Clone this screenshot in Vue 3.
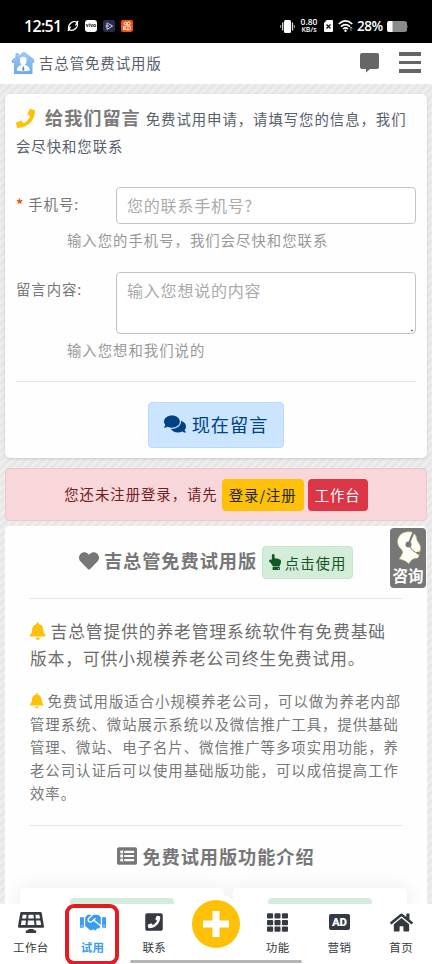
<script setup>
const icons = {
  phone: { box: '0 0 512 512', d: 'M493.4 24.6l-104-24c-11.3-2.6-22.9 3.3-27.5 13.9l-48 112c-4.2 9.8-1.4 21.3 6.9 28l60.6 49.6c-36 76.7-98.9 140.5-177.2 177.2l-49.6-60.6c-6.8-8.3-18.2-11.1-28-6.9l-112 48C3.9 366.5-2 378.1.6 389.4l24 104C27.1 504.2 36.7 512 48 512c256.1 0 464-207.5 464-464 0-11.2-7.7-20.9-18.6-23.4z' },
  comments: { box: '0 0 576 512', d: 'M416 192c0-88.4-93.1-160-208-160S0 103.6 0 192c0 34.3 14.1 65.9 38 92-13.4 30.2-35.5 54.2-35.8 54.5-2.2 2.3-2.8 5.7-1.5 8.7S4.8 352 8 352c36.6 0 66.9-12.3 88.7-25 32.2 15.7 70.3 25 111.3 25 114.9 0 208-71.6 208-160zm122 220c23.9-26 38-57.7 38-92 0-66.9-53.5-124.2-129.3-148.1.9 6.6 1.3 13.3 1.3 20.1 0 105.9-107.7 192-240 192-10.8 0-21.3-.8-31.7-1.9C207.8 439.6 281.8 480 368 480c41 0 79.1-9.2 111.3-25 21.8 12.7 52.1 25 88.7 25 3.2 0 6.1-1.9 7.3-4.8 1.3-2.9.7-6.3-1.5-8.7-.3-.3-22.4-24.2-35.8-54.5z' },
  heart: { box: '0 0 512 512', d: 'M462.3 62.6C407.5 15.9 326 24.3 275.7 76.2L256 96.5l-19.7-20.3C186.1 24.3 104.5 15.9 49.7 62.6c-62.8 53.6-66.1 149.8-9.9 207.9l193.5 199.8c12.5 12.9 32.8 12.9 45.3 0l193.5-199.8c56.3-58.1 53-154.3-9.8-207.9z' },
  bell: { box: '0 0 448 512', d: 'M224 512c35.32 0 63.97-28.65 63.97-64H160.03c0 35.35 28.65 64 63.97 64zm215.39-149.71c-19.32-20.76-55.47-51.99-55.47-154.29 0-77.7-54.48-139.9-127.94-155.16V32c0-17.67-14.32-32-31.98-32s-31.98 14.33-31.98 32v20.84C118.56 68.1 64.08 130.3 64.08 208c0 102.3-36.15 133.53-55.47 154.29-6 6.45-8.66 14.16-8.61 21.71.11 16.4 12.98 32 32.1 32h383.8c19.12 0 32-15.6 32.1-32 .05-7.55-2.61-15.27-8.61-21.71z' },
  point: { box: '0 0 384 512', d: 'M135.652 0c23.625 0 43.826 20.65 43.826 44.8v99.851c17.048-16.34 49.766-18.346 70.944 6.299 22.829-14.288 53.017-2.147 62.315 16.45C361.878 158.426 384 189.346 384 240c0 2.746-.203 13.276-.195 16 .168 61.971-31.065 76.894-38.315 123.731C343.683 391.404 333.599 400 321.786 400H150.261l-.001-.002c-18.366-.011-35.889-10.607-43.845-28.464C93.421 342.648 57.377 276.122 29.092 264 10.897 256.203.008 242.616 0 224c-.014-34.222 35.098-57.752 66.908-44.119 8.359 3.583 16.67 8.312 24.918 14.153V44.8c0-23.45 20.543-44.8 43.826-44.8zM136 416h192c13.255 0 24 10.745 24 24v48c0 13.255-10.745 24-24 24H136c-13.255 0-24-10.745-24-24v-48c0-13.255 10.745-24 24-24zm168 28c-11.046 0-20 8.954-20 20s8.954 20 20 20 20-8.954 20-20-8.954-20-20-20z' },
  list: { box: '0 0 512 512', d: 'M464 32H48C21.500 32 0 53.500 0 80v352c0 26.500 21.500 48 48 48h416c26.500 0 48-21.500 48-48V80c0-26.500-21.500-48-48-48zM84 116h72v72H84zM84 220h72v72H84zM84 324h72v72H84zM186 124h252v56H186zM186 228h252v56H186zM186 332h252v56H186z' },
  panel: { box: '0 0 640 512', d: 'M431.98 448.01l-47.97.05V416h-128v32.21l-47.98.05c-8.82.01-15.97 7.16-15.98 15.99l-.05 31.73c-.01 8.85 7.17 16.03 16.02 16.02l223.96-.26c8.82-.01 15.97-7.16 15.98-15.98l.04-31.73c.01-8.85-7.17-16.03-16.02-16.02zM585.2 26.74C582.58 11.31 568.99 0 553.06 0H86.93C71 0 57.41 11.31 54.79 26.74-3.32 369.16.04 348.08.03 352c-.03 17.32 14.29 32 32.6 32h574.74c18.23 0 32.51-14.56 32.59-31.79.02-4.08 3.35 16.95-54.76-325.47zM259.83 64h120.33l9.77 96H250.06l9.77-96zm-75.17 256H71.09L90.1 208h105.97l-11.41 112zm16.29-160H98.24l16.29-96h96.19l-9.77 96zm32.82 160l11.4-112h149.65l11.4 112H233.77zm195.5-256h96.19l16.29 96H439.04l-9.77-96zm26.06 256l-11.4-112H549.9l19.01 112H455.33z' },
  handshake: { box: '0 0 640 512', d: 'M434.7 64h-85.9c-8 0-15.7 3-21.6 8.4l-98.3 90c-.1.1-.2.3-.3.4-16.6 15.6-16.3 40.5-2.1 56 12.7 13.9 39.4 17.6 56.1 2.7.1-.1.3-.1.4-.2l79.9-73.2c6.5-5.9 16.7-5.5 22.6 1 6 6.5 5.5 16.6-1 22.6l-26.1 23.9L504 313.8c2.9 2.4 5.5 5 7.9 7.7V128l-54.6-54.6c-5.900-6-14.1-9.400-22.600-9.400zM544 128.200v223.900c0 17.700 14.300 32 32 32h64V128.200h-96zm48 223.900c-8.800 0-16-7.200-16-16s7.200-16 16-16 16 7.200 16 16-7.200 16-16 16zM0 384h64c17.700 0 32-14.300 32-32V128.200H0V384zm48-63.900c8.800 0 16 7.200 16 16s-7.200 16-16 16-16-7.200-16-16c0-8.900 7.200-16 16-16zm435.900 18.600L334.600 217.500l-30 27.500c-29.700 27.100-75.200 24.500-101.700-4.400-26.900-29.400-24.800-74.900 4.400-101.700L289.100 64h-83.800c-8.500 0-16.600 3.400-22.600 9.400L128 128v223.900h18.300l90.500 81.900c27.400 22.300 67.700 18.100 90-9.300l.2-.2 17.900 15.500c15.900 13 39.400 10.500 52.300-5.400l31.400-38.600 5.400 4.400c13.700 11.100 33.900 9.100 45-4.700l9.500-11.700c11.200-13.800 9.100-33.900-4.600-45.100z' },
  phoneSquare: { box: '0 0 448 512', d: 'M400 32H48C21.49 32 0 53.49 0 80v352c0 26.51 21.49 48 48 48h352c26.51 0 48-21.49 48-48V80c0-26.51-21.49-48-48-48zM94 416c-7.033 0-13.057-4.873-14.616-11.627l-14.998-65a15 15 0 0 1 8.707-17.16l69.998-29.999a15 15 0 0 1 17.518 4.289l30.997 37.885c48.944-22.963 88.297-62.858 110.781-110.78l-37.886-30.997a15.001 15.001 0 0 1-4.289-17.518l30-69.998a15 15 0 0 1 17.16-8.707l65 14.998A14.997 14.997 0 0 1 384 126c0 160.292-129.945 290-290 290z' },
  grid: { box: '0 0 512 512', d: 'M24 32h101q24 0 24 24v80q0 24-24 24H24q-24 0-24-24V56q0-24 24-24zM206 32h100q24 0 24 24v80q0 24-24 24H206q-24 0-24-24V56q0-24 24-24zM387 32h101q24 0 24 24v80q0 24-24 24H387q-24 0-24-24V56q0-24 24-24zM24 192h101q24 0 24 24v80q0 24-24 24H24q-24 0-24-24v-80q0-24 24-24zM206 192h100q24 0 24 24v80q0 24-24 24H206q-24 0-24-24v-80q0-24 24-24zM387 192h101q24 0 24 24v80q0 24-24 24H387q-24 0-24-24v-80q0-24 24-24zM24 352h101q24 0 24 24v80q0 24-24 24H24q-24 0-24-24v-80q0-24 24-24zM206 352h100q24 0 24 24v80q0 24-24 24H206q-24 0-24-24v-80q0-24 24-24zM387 352h101q24 0 24 24v80q0 24-24 24H387q-24 0-24-24v-80q0-24 24-24z' },
  home: { box: '0 0 576 512', d: 'M280.37 148.26L96 300.11V464a16 16 0 0 0 16 16l112.06-.29a16 16 0 0 0 15.92-16V368a16 16 0 0 1 16-16h64a16 16 0 0 1 16 16v95.64a16 16 0 0 0 16 16.05L464 480a16 16 0 0 0 16-16V300L295.67 148.26a12.19 12.19 0 0 0-15.3 0zM571.6 251.47L488 182.56V44.05a12 12 0 0 0-12-12h-56a12 12 0 0 0-12 12v72.61L318.47 43a48 48 0 0 0-61 0L4.34 251.47a12 12 0 0 0-1.6 16.9l25.5 31A12 12 0 0 0 45.15 301l235.22-193.74a12.19 12.19 0 0 1 15.3 0L530.9 301a12 12 0 0 0 16.9-1.6l25.5-31a12 12 0 0 0-1.7-16.93z' },
}
const tabs = [
  { label: '工作台', icon: 'panel', cls: 'i-panel' },
  { label: '试用', icon: 'handshake', cls: 'i-hand', active: true },
  { label: '联系', icon: 'phoneSquare', cls: 'i-phone' },
  { plus: true },
  { label: '功能', icon: 'grid', cls: 'i-grid' },
  { label: '营销', ad: true },
  { label: '首页', icon: 'home', cls: 'i-home' },
]
</script>

<template>
  <div class="screen">
    <div class="status">
      <div class="status-left">
        <span class="clock">12:51</span>
        <svg class="s-app s-orbit" viewBox="0 0 12 12"><ellipse cx="6" cy="6" rx="5.2" ry="3.600" transform="rotate(-42 6 6)" fill="none" stroke="#fff" stroke-width="1.300"/><path d="M1 11L3.500 6.500M11 1L8.500 5.500" stroke="#fff" stroke-width="1.500"/></svg>
        <span class="s-app vivo">vivo</span>
        <svg class="s-app" viewBox="0 0 12 12"><rect width="12" height="12" rx="2" fill="#272b4c"/><path d="M4 2.500v7L9.500 6L5.200 3.500M2.500 6H6" fill="none" stroke="#dcd8f2" stroke-width="1"/></svg>
        <svg class="s-app" viewBox="0 0 12 12"><rect width="12" height="12" rx="2" fill="#f4500c"/><g fill="none" stroke="#fff" stroke-width="1"><circle cx="4.500" cy="3.500" r="1.300"/><circle cx="7.700" cy="3.500" r="1.500"/><rect x="4.200" y="6" width="5.200" height="3.800" rx="1"/><path d="M4 7L2.500 6.300V9.500L4 8.800M6 8h1.800"/></g></svg>
      </div>
      <div class="status-right">
        <svg class="s-vibrate" viewBox="0 0 15 13"><rect x="4" y="0" width="7" height="13" rx="1.500" fill="#fff"/><path d="M2.700 2.500v8M12.500 2.500v8" stroke="#ddd" stroke-width="1.300"/><path d="M.7 5v3M14.400 5v3" stroke="#aaa"/></svg>
        <span class="speed"><b>0.80</b><b>KB/s</b></span>
        <svg class="s-sim" viewBox="0 0 9 12"><path d="M2.800 0H8q1 0 1 1v10q0 1-1 1H1q-1 0-1-1V3z" fill="#fff"/><path d="M2.500 4.500l4 4M6.500 4.500l-4 4" stroke="#111" stroke-width="1.300"/></svg>
        <svg class="s-wifi" viewBox="0 0 15 12"><g fill="none" stroke="#fff" stroke-width="1.600"><path d="M.7 4Q7.500-2.200 14.300 4M3 6.600Q7.500 2.600 12 6.600M5 9Q7.500 6.900 10 9"/></g><circle cx="7.500" cy="10.800" r="1.200" fill="#fff"/><path d="M13 7v4M11.800 8.300L13 7l1.200 1.300" stroke="#bbb" fill="none" stroke-width=".8"/></svg>
        <span class="percent">28%</span>
        <svg class="s-battery" viewBox="0 0 21 11"><rect width="20" height="11" rx="2.500" fill="#8a8a8a"/><path d="M2.500 0H5.500V11H2.500Q0 11 0 8.500V2.500Q0 0 2.500 0z" fill="#fff"/><path d="M20 3.500q1 2 0 4z" fill="#8a8a8a"/></svg>
      </div>
    </div>

    <header class="topbar">
      <svg class="logo" viewBox="0 0 24 24">
        <defs><linearGradient id="house" x1="0" y1="0" x2="0" y2="1"><stop offset="0" stop-color="#9ccbf8"/><stop offset="1" stop-color="#6aaaf0"/></linearGradient></defs>
        <path d="M4.500 2h3.300v2.300L13 .5L23.500 8.500L22.800 12H21.500V23H3V12H1L.5 9.500L4.500 6z" fill="url(#house)"/>
        <path d="M8.800 9Q8.800 5.800 12.200 5.800T15.600 9Q15.600 12.500 13.900 14Q19 15.300 18.800 19.500Q12 21 5.700 19.500Q5.700 15.300 10.600 14Q8.800 12.500 8.800 9z" fill="#fff"/>
        <path d="M11.600 15.500h1.300l.5 3.500l-1.200 1L11.200 19z" fill="#4b91d8"/>
      </svg>
      <span class="brand">吉总管免费试用版</span>
      <svg class="bubble" viewBox="0 0 19 20"><path d="M2 0H17Q19 0 19 2V14Q19 16 17 16H10L6 19.500V16H2Q0 16 0 14V2Q0 0 2 0z" fill="#666"/></svg>
      <div class="burger"><i></i><i></i><i></i></div>
    </header>

    <main class="content">
      <section class="card form-card">
        <p class="form-title"><svg class="i-call" :viewBox="icons.phone.box"><path :d="icons.phone.d"/></svg><strong>给我们留言</strong><span>免费试用申请，请填写您的信息，我们会尽快和您联系</span></p>
        <div class="field">
          <label><em>*</em>手机号:</label>
          <div class="box">您的联系手机号?</div>
        </div>
        <p class="hint">输入您的手机号，我们会尽快和您联系</p>
        <div class="field field-area">
          <label>留言内容:</label>
          <div class="box area">输入您想说的内容<svg class="grip" viewBox="0 0 3 3"><circle cx="1" cy="1.500" r=".8" fill="#333"/></svg></div>
        </div>
        <p class="hint">输入您想和我们说的</p>
        <div class="rule"></div>
        <div class="submit-row"><button class="submit"><svg class="i-comments" :viewBox="icons.comments.box"><path :d="icons.comments.d"/></svg>现在留言</button></div>
      </section>

      <section class="alert">
        <span>您还未注册登录，请先</span>
        <button class="btn warn">登录/注册</button>
        <button class="btn danger">工作台</button>
      </section>

      <section class="card intro">
        <div class="intro-head">
          <svg class="i-heart" :viewBox="icons.heart.box"><path :d="icons.heart.d"/></svg>
          <strong>吉总管免费试用版</strong>
          <button class="btn use"><svg class="i-point" :viewBox="icons.point.box"><path :d="icons.point.d"/></svg>点击使用</button>
        </div>
        <div class="rule"></div>
        <p class="lead"><svg class="i-bell" :viewBox="icons.bell.box"><path :d="icons.bell.d"/></svg>吉总管提供的养老管理系统软件有免费基础版本，可供小规模养老公司终生免费试用。</p>
        <p class="detail"><svg class="i-bell" :viewBox="icons.bell.box"><path :d="icons.bell.d"/></svg>免费试用版适合小规模养老公司，可以做为养老内部管理系统、微站展示系统以及微信推广工具，提供基础管理、微站、电子名片、微信推广等多项实用功能，养老公司认证后可以使用基础版功能，可以成倍提高工作效率。</p>
        <div class="rule"></div>
        <div class="feature-head"><svg class="i-list" :viewBox="icons.list.box"><path fill-rule="evenodd" :d="icons.list.d"/></svg><strong>免费试用版功能介绍</strong></div>
        <div class="features">
          <div class="feature"><div class="pill"></div></div>
          <div class="feature"><div class="pill"></div></div>
        </div>
      </section>
    </main>

    <nav class="tabs">
      <div v-for="(t, i) in tabs" :key="i" class="tab" :class="{ active: t.active }">
        <div v-if="t.plus" class="plus"><svg viewBox="0 0 26 26"><path d="M13 0v26M0 13h26" stroke="#fff" stroke-width="7"/></svg></div>
        <template v-else>
          <div class="icon-slot">
            <span v-if="t.ad" class="ad">AD</span>
            <svg v-else :class="t.cls" :viewBox="icons[t.icon].box"><path :d="icons[t.icon].d"/></svg>
          </div>
          <span class="tab-label">{{ t.label }}</span>
        </template>
      </div>
      <div class="marker"></div>
      <div class="gesture"></div>
    </nav>

    <aside class="consult">
      <svg viewBox="0 0 28 34"><path d="M18.500 1Q8-1 4 7Q2 14 7 18Q10 21 7.500 24L5 28Q11 29 15 33Q17 28 21 27.500Q26 28 25 22Q28 18 26 14L23 9Q23 4 18.500 1z" fill="#fffef4" stroke="#a59558" stroke-width=".6"/><path d="M20 0L15.500 11" fill="none" stroke="#777" stroke-width="2"/><path d="M16 15Q18 21 24 22" fill="none" stroke="#8a7b44" stroke-width="1"/><circle cx="14.500" cy="13.500" r="3" fill="#777"/><circle cx="24" cy="22" r="1.500" fill="#8a7b44"/></svg>
      <span>咨询</span>
    </aside>
  </div>
</template>

<style>
body { margin: 0; overflow: hidden; }
</style>

<style scoped>
* { box-sizing: border-box; }
p { margin: 0; }
svg { fill: currentColor; flex: none; }
button { font: inherit; letter-spacing: inherit; margin: 0; }
.screen { position: relative; width: 432px; height: 964px; overflow: hidden; display: flex; flex-direction: column; font-family: "Noto Sans CJK SC", sans-serif; font-size: 14.4px; letter-spacing: .95px; color: #777; background: repeating-linear-gradient(135deg, #e7e7e7 0 2.500px, #eeeeee 3.500px 5.500px, #e7e7e7 6px); }
.status { height: 43px; flex: none; background: #000; color: #fff; display: flex; justify-content: space-between; padding: 9px 24px 0 24px; letter-spacing: 0; }
.status-left, .status-right { display: flex; align-items: center; height: 34px; }
.clock { font: 600 16px/34px "Open Sans", sans-serif; width: 43px; letter-spacing: -.7px; white-space: nowrap; }
.s-app { width: 12px; height: 12px; margin-right: 6px; }
.vivo { background: #fff; border-radius: 3px; color: #111; font: 700 5px/11px "Open Sans", sans-serif; text-align: center; }
.s-vibrate { width: 15px; height: 13px; }
.speed { width: 20px; margin-left: 4px; display: flex; flex-direction: column; align-items: center; font: 600 8.500px/8px "Open Sans", sans-serif; }
.speed b { font-weight: 600; }
.speed b:last-child { font-size: 7px; }
.s-sim { width: 9px; height: 12px; margin-left: 5px; }
.s-wifi { width: 15px; height: 12px; margin-left: 5px; }
.percent { font: 600 13.500px/34px "Open Sans", sans-serif; margin-left: 4px; width: 27px; white-space: nowrap; letter-spacing: -.5px; }
.s-battery { width: 21px; height: 11px; margin-left: 3px; }
.topbar { height: 41px; flex: none; background: #fff; display: flex; align-items: center; padding: 0 11px 2px; color: #57606a; }
.logo { width: 24px; height: 24px; margin: 1px 4px 0 0; }
.brand { flex: 1; padding-bottom: 1px; }
.bubble { width: 19px; height: 20px; margin: 1px 20px 0 0; }
.burger { width: 22px; display: flex; flex-direction: column; gap: 5px; }
.burger i { height: 3.500px; background: #666; }
.content { flex: 1; min-height: 0; overflow: hidden; padding: 10px 5px 0; }
.card { background: #fefefe; border-radius: 5px; }
.form-card { height: 364px; padding: 10px 11px 0; box-shadow: 0 1px 3px #0002; }
.form-title { line-height: 27px; color: #57606a; height: 83px; }
.form-title strong { font-size: 18.2px; color: #7b7b7b; margin-right: 5px; }
.i-call { width: 19px; height: 19px; color: #ffc107; vertical-align: -3px; margin-right: 10px; }
.field { display: flex; }
.field label { width: 100px; line-height: 33px; color: #777; }
.field em { color: #e8590c; font-weight: 700; font-style: normal; margin-right: 4px; }
.box { position: relative; width: 300px; height: 37px; border: 1px solid #c4c4c8; border-radius: 4px; padding: 0 10px; line-height: 34px; font-size: 16px; letter-spacing: .8px; color: #aaa; background: #fff; }
.field-area { margin-top: 16px; }
.box.area { height: 62px; }
.grip { position: absolute; right: 1px; bottom: 1px; width: 3px; height: 3px; }
.hint { padding-left: 51px; line-height: 31px; height: 32px; color: #999; letter-spacing: .98px; }
.rule { height: 1px; background: #e4e6e8; }
.form-card .rule { margin-top: 15px; }
.submit-row { display: flex; justify-content: center; margin-top: 20px; }
.submit { width: 136px; height: 46px; border: 1px solid #b8daff; border-radius: 4px; background: #cce5ff; color: #004085; font-size: 18.200px; display: flex; align-items: center; justify-content: center; padding: 0 0 2px; }
.i-comments { width: 22px; height: 20px; margin-right: 6px; }
.alert { height: 53px; margin-top: 10px; border: 1px solid #f1c5ca; border-radius: 4px; background: #f8d7da; color: #721c24; display: flex; align-items: center; justify-content: center; }
.alert > span { padding-bottom: 2px; }
.btn { height: 32px; border-radius: 4px; border: 0; padding: 0 0 1px; display: flex; align-items: center; justify-content: center; white-space: nowrap; }
.warn { width: 82px; background: #ffc107; color: #212529; margin: 0 4px; }
.danger { width: 60px; background: #dc3545; color: #fff; }
.intro { margin-top: 5px; height: 500px; padding: 20px 15px 0 25px; }
.intro .rule { width: 372px; }
.intro-head { display: flex; align-items: center; justify-content: center; width: 372px; height: 33px; }
.intro-head strong, .feature-head strong { font-size: 18.200px; letter-spacing: .95px; color: #777; line-height: 30px; white-space: nowrap; }
.intro-head strong { padding-bottom: 5px; }
.i-heart { width: 20px; height: 20px; margin: 0 5px 4px 0; color: #777; }
.use { width: 91px; height: 33px; margin-left: 5px; border: 1px solid #c3e6cb; background: #d4edda; color: #155724; }
.i-point { width: 12px; height: 16px; margin-right: 4px; }
.intro-head + .rule { margin-top: 19px; }
.lead { width: 372px; margin-top: 19px; font-size: 16.700px; line-height: 27px; color: #6c6c6c; letter-spacing: .97px; }
.detail { margin-top: 17px; font-size: 14.400px; line-height: 23.100px; color: #777; width: 378px; padding-right: 5px; letter-spacing: .98px; }
.i-bell { color: #ffc107; vertical-align: -2px; width: 15.500px; height: 18px; margin-right: 5px; }
.detail .i-bell { width: 13.500px; height: 15.500px; vertical-align: -1.500px; margin-right: 4px; }
.detail + .rule { margin-top: 21px; }
.feature-head { display: flex; align-items: center; justify-content: center; width: 372px; height: 30px; margin-top: 15px; }
.i-list { width: 20px; height: 20px; margin-right: 5px; color: #777; }
.features { display: grid; grid-template-columns: 204px 174px; gap: 9px; margin: 17px 0 0 -10px; }
.feature { height: 80px; border-radius: 5px; background: #fff; padding-top: 10px; box-shadow: 0 0 20px #00000014; }
.pill { width: 104px; height: 34px; margin: 0 auto; border-radius: 4px; background: #d4edda; }
.tabs { position: relative; height: 60px; flex: none; background: #fff; display: grid; grid-template-columns: repeat(7, 1fr); }
.tab { display: flex; flex-direction: column; align-items: center; color: #343a40; font-size: 11.500px; letter-spacing: .4px; }
.icon-slot { height: 36px; display: flex; align-items: center; justify-content: center; }
.tab-label { line-height: 15px; white-space: nowrap; }
.active { color: #3b9cf0; font-weight: 700; }
.i-panel { width: 26px; height: 21px; }
.i-hand { width: 26px; height: 21px; }
.i-phone { width: 18px; height: 20px; }
.i-grid { width: 21px; height: 21px; }
.i-home { width: 23px; height: 21px; }
.ad { width: 21px; height: 16px; border-radius: 2px; background: #343a40; color: #fff; font: 900 11.500px/16px Roboto, sans-serif; letter-spacing: -.2px; text-align: center; }
.plus { width: 60px; height: 60px; flex: none; margin-top: -10px; border: 6.500px solid #fff; border-radius: 50%; background: #ffc107; display: flex; align-items: center; justify-content: center; }
.plus svg { width: 26px; height: 26px; }
.marker { position: absolute; left: 65px; top: 0; width: 54px; height: 61px; border: 4px solid #e31b23; border-radius: 9px; }
.gesture { position: absolute; left: 130px; top: 56px; width: 172px; height: 3px; border-radius: 2px; background: #b5b5b5; }
.consult { position: absolute; left: 390px; top: 528px; width: 36px; height: 60px; border-radius: 4px; background: #777; color: #fff; display: flex; flex-direction: column; align-items: center; padding-top: 3px; font-size: 15.500px; font-weight: 700; letter-spacing: 0; line-height: 21px; }
.consult svg { width: 28px; height: 34px; }
</style>
